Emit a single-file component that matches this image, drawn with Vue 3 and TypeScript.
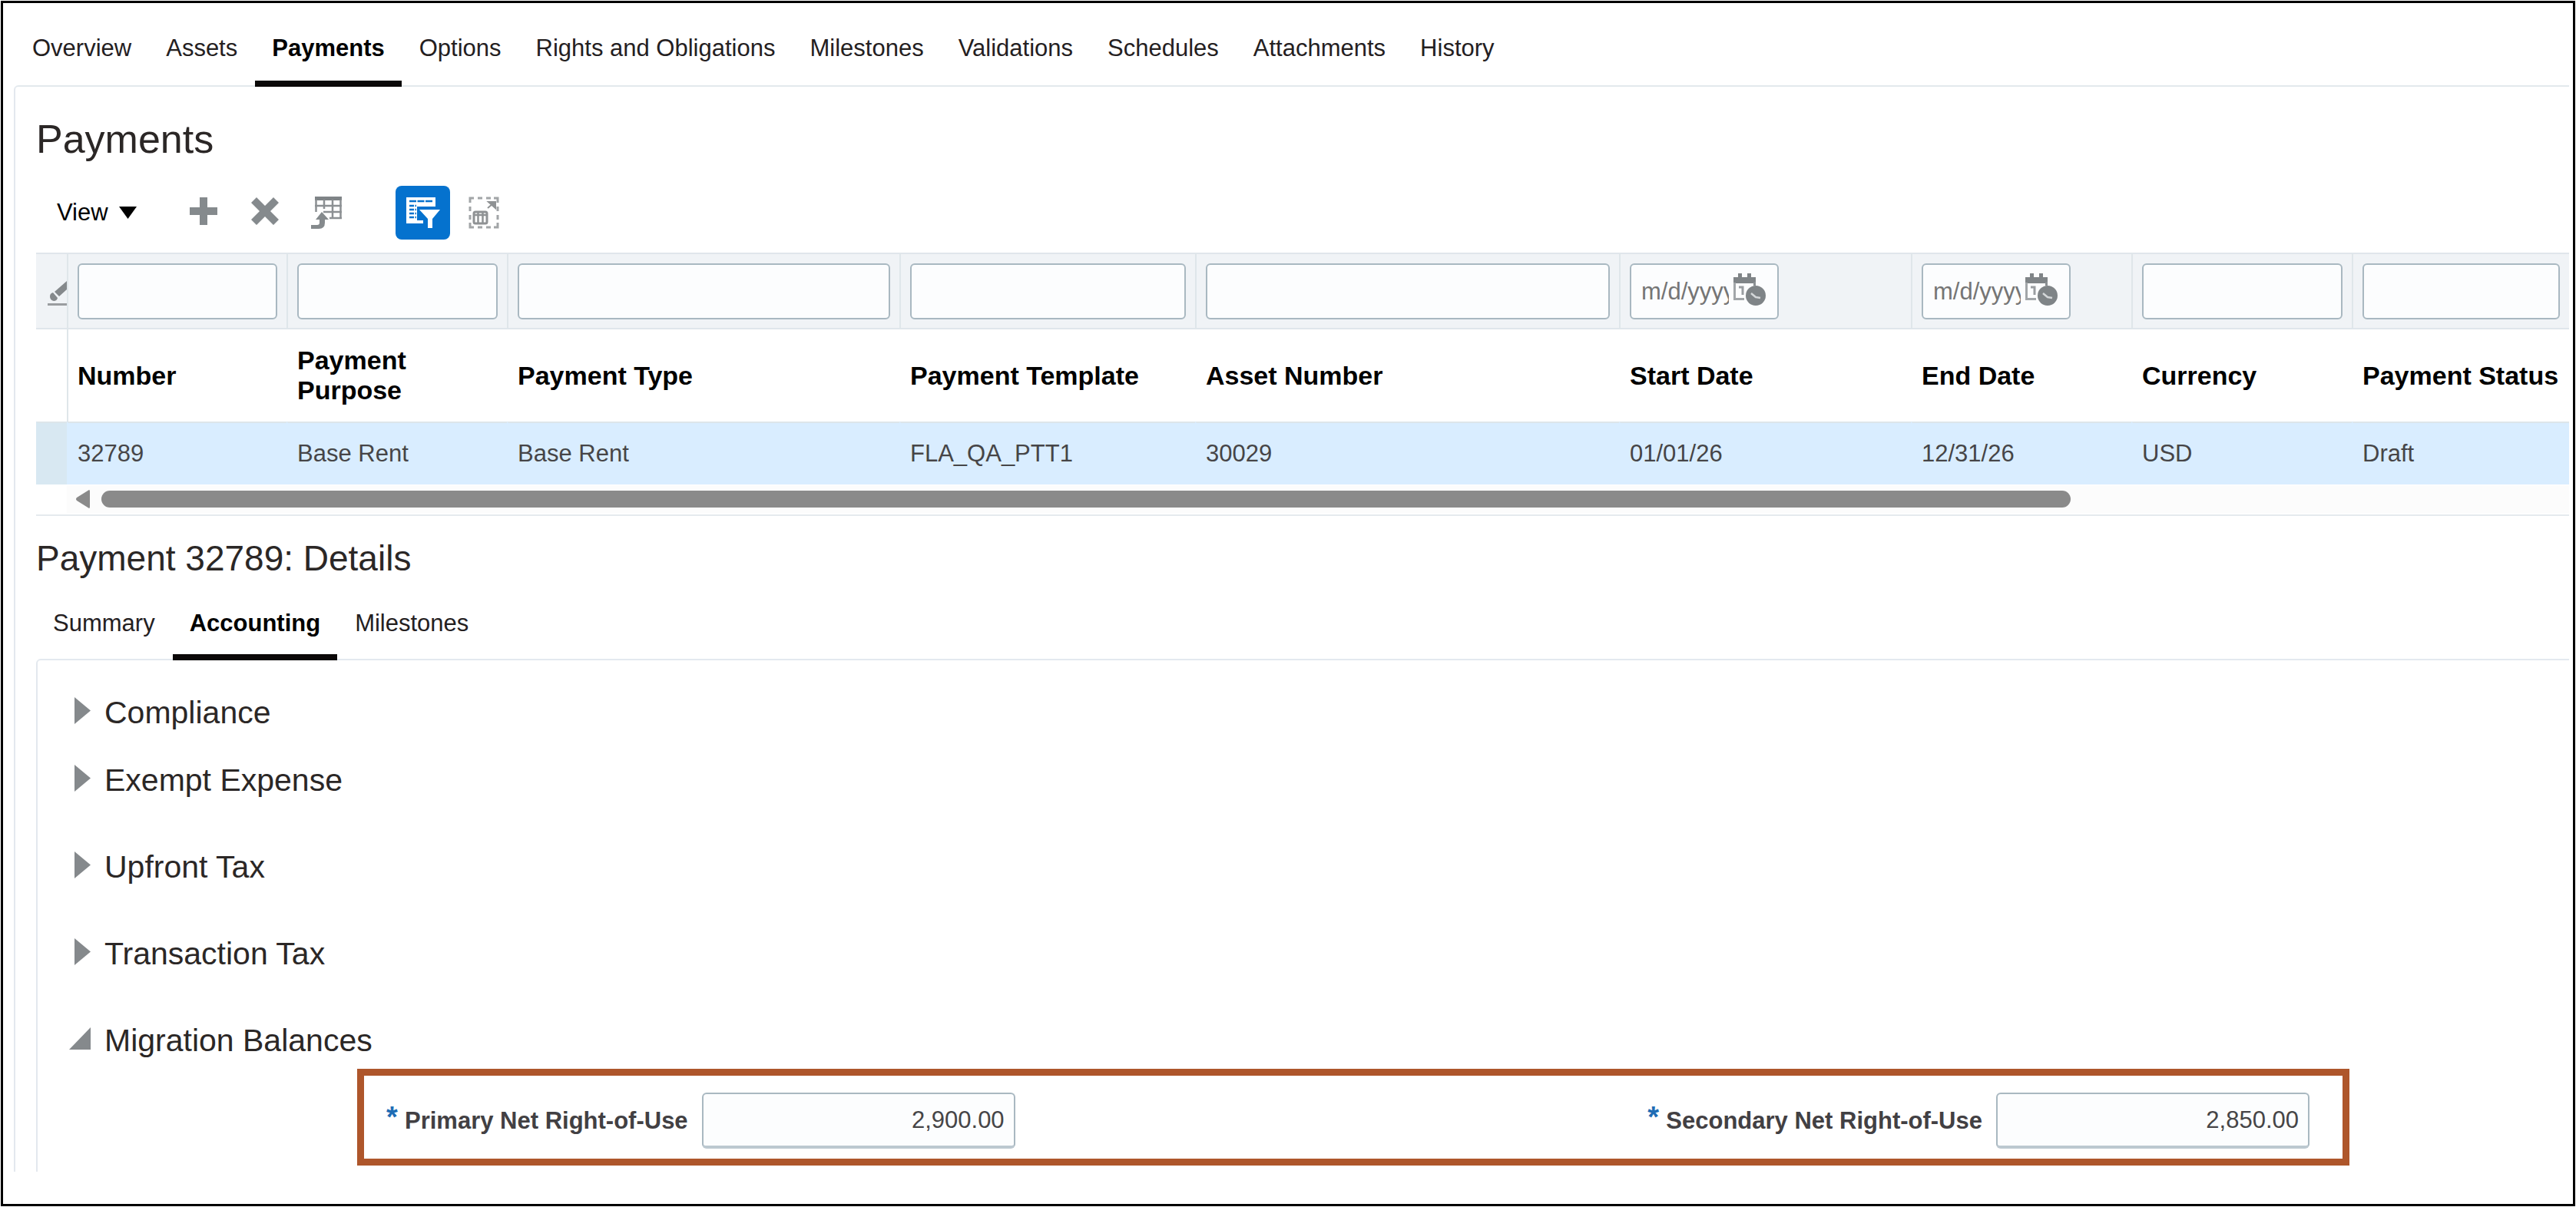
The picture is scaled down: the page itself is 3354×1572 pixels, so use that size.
<script setup lang="ts">
import { reactive, ref } from 'vue'

interface Column {
  key: string
  label: string
  width: number
  date?: boolean
}

const tabs: string[] = [
  'Overview', 'Assets', 'Payments', 'Options', 'Rights and Obligations',
  'Milestones', 'Validations', 'Schedules', 'Attachments', 'History',
]
const activeTab = ref('Payments')

const detailTabs: string[] = ['Summary', 'Accounting', 'Milestones']
const activeDetail = ref('Accounting')

const columns: Column[] = [
  { key: 'number', label: 'Number', width: 286 },
  { key: 'purpose', label: 'Payment Purpose', width: 287 },
  { key: 'type', label: 'Payment Type', width: 511 },
  { key: 'template', label: 'Payment Template', width: 385 },
  { key: 'asset', label: 'Asset Number', width: 552 },
  { key: 'start', label: 'Start Date', width: 380, date: true },
  { key: 'end', label: 'End Date', width: 287, date: true },
  { key: 'currency', label: 'Currency', width: 287 },
  { key: 'status', label: 'Payment Status', width: 283 },
]

const rows: Record<string, string>[] = [
  {
    number: '32789',
    purpose: 'Base Rent',
    type: 'Base Rent',
    template: 'FLA_QA_PTT1',
    asset: '30029',
    start: '01/01/26',
    end: '12/31/26',
    currency: 'USD',
    status: 'Draft',
  },
]

const visibleShare = 80

const sections = reactive([
  { title: 'Compliance', open: false, tight: true },
  { title: 'Exempt Expense', open: false, tight: false },
  { title: 'Upfront Tax', open: false, tight: false },
  { title: 'Transaction Tax', open: false, tight: false },
  { title: 'Migration Balances', open: true, tight: false },
])

const primary = ref('2,900.00')
const secondary = ref('2,850.00')
</script>

<template>
  <div class="page">
    <div class="frame">
      <nav class="tabs" aria-label="Lease sections">
        <button
          v-for="tab in tabs"
          :key="tab"
          type="button"
          class="tab"
          :class="{ active: tab === activeTab }"
          @click="activeTab = tab"
        >{{ tab }}</button>
      </nav>

      <main class="panel">
        <h1 class="title">Payments</h1>

        <div class="toolbar">
          <button type="button" class="view">
            View
            <svg width="23" height="16" viewBox="0 0 23 16" aria-hidden="true"><path d="M0 0H23L11.500 16Z" fill="#000" /></svg>
          </button>
          <div class="tools">
            <button type="button" class="tool" aria-label="Add">
              <svg width="36" height="38" viewBox="0 0 36 38"><path d="M13 1h10v13h13v10H23v13H13V24H0V14h13z" fill="#858a8d" /></svg>
            </button>
            <button type="button" class="tool" aria-label="Delete">
              <svg width="38" height="38" viewBox="0 0 38 38"><path d="M8 1l11 11L30 1l7 7-11 11 11 11-7 7-11-11L8 37l-7-7 11-11L1 8z" fill="#858a8d" /></svg>
            </button>
            <button type="button" class="tool" aria-label="Duplicate">
              <svg width="40" height="42" viewBox="0 0 40 42">
                <path d="M5 0h35v5H5z" fill="#7f8487" />
                <path d="M6.500 4v16M17 4v12M28 4v24M38.500 4v24M5 12h35M16 20h24M24 28h16" fill="none" stroke="#8c9093" stroke-width="2.500" />
                <path d="M14 20l9 10h-5v4q0 8-8 8H0v-5h8q3 0 3-3v-4H6z" fill="#858a8d" />
              </svg>
            </button>
          </div>
          <button type="button" class="filter" aria-label="Query by example" aria-pressed="true">
            <svg width="71" height="70" viewBox="0 0 71 70">
              <path d="M14 15h38v12H28v18h8v4H14z" fill="#fff" />
              <path d="M18 20h30" stroke="#0572ce" stroke-width="2.500" stroke-dasharray="9 1.500" />
              <path d="M18 26h9M18 31h9M18 36h9M18 41h9" stroke="#0572ce" stroke-width="2.500" stroke-dasharray="6 1.500" />
              <path d="M31 31h27L48 43v12h-6V43z" fill="#fff" />
            </svg>
          </button>
          <button type="button" class="tool detach" aria-label="Detach">
            <svg width="40" height="42" viewBox="0 0 40 42">
              <path d="M7 2H2v6M33 2h5v6M7 40H2v-6M33 40h5v-6M12 2h6M23 2h6M12 40h6M23 40h6M2 13v6M2 24v6M38 13v6M38 24v6" fill="none" stroke="#a2a5a7" stroke-width="3" />
              <rect x="7" y="20" width="17" height="15" rx="2" fill="none" stroke="#8f9294" stroke-width="3" />
              <path d="M12.500 20v15M18.500 20v15M7 24h17" stroke="#8f9294" stroke-width="2.500" />
              <path d="M25 15l7-6M26 7h9v8z" fill="#8f9294" stroke="#8f9294" stroke-width="2" />
            </svg>
          </button>
        </div>

        <div class="grid-area">
          <table class="grid">
            <colgroup>
              <col style="width: 40px" />
              <col v-for="col in columns" :key="col.key" :style="{ width: col.width + 'px' }" />
            </colgroup>
            <thead>
              <tr class="filters">
                <td class="gutter">
                  <button type="button" class="eraser" aria-label="Clear filters">
                    <svg width="25" height="40" viewBox="0 -7 25 40">
                      <path d="M25 0v11l-10 9-6-6z" fill="#85898c" />
                      <path d="M7 15l6 7q-1 4-5 4-5-1-5-6 0-4 4-5z" fill="#85898c" />
                      <path d="M0 30.500h25" stroke="#9a9da0" stroke-width="3" />
                    </svg>
                  </button>
                </td>
                <td v-for="col in columns" :key="col.key">
                  <div v-if="col.date" class="date-box">
                    <input type="text" class="date-input" placeholder="m/d/yyyy" :aria-label="'Filter ' + col.label" />
                    <button type="button" class="calendar" :aria-label="'Pick ' + col.label">
                      <svg width="42" height="48" viewBox="0 0 42 48">
                        <path d="M0 5h6V0h5v5h7V0h5v5h6v8H0z" fill="#7f8487" />
                        <path d="M1.500 12v21.500H14" fill="none" stroke="#a2a6a9" stroke-width="3" />
                        <path d="M27.500 11v5" stroke="#8a8f92" stroke-width="3" />
                        <path d="M7 18h5v10" fill="none" stroke="#9a9ea1" stroke-width="3" />
                        <circle cx="29" cy="29" r="13" fill="#7f8487" />
                        <path d="M23 26l6 5 6 1" fill="none" stroke="#d4d7d9" stroke-width="2.500" />
                      </svg>
                    </button>
                  </div>
                  <input v-else type="text" class="box" :aria-label="'Filter ' + col.label" />
                </td>
              </tr>
              <tr class="heads">
                <td class="gutter-head"></td>
                <th v-for="col in columns" :key="col.key" scope="col">{{ col.label }}</th>
              </tr>
            </thead>
            <tbody>
              <tr v-for="row in rows" :key="row.number" class="selected">
                <td class="gutter-cell"></td>
                <td v-for="col in columns" :key="col.key">{{ row[col.key] }}</td>
              </tr>
            </tbody>
          </table>
          <div class="scroll">
            <svg width="18" height="24" viewBox="0 0 18 24" aria-hidden="true"><path d="M17 0q1 0 1 2v20q0 2-1 2L1 14q-2-2 0-4z" fill="#8a8a8a" /></svg>
            <div class="track">
              <div class="thumb" :style="{ width: visibleShare + '%' }"></div>
            </div>
          </div>
        </div>

        <h2 class="subtitle">Payment 32789: Details</h2>

        <nav class="tabs inner" aria-label="Payment details">
          <button
            v-for="tab in detailTabs"
            :key="tab"
            type="button"
            class="tab"
            :class="{ active: tab === activeDetail }"
            @click="activeDetail = tab"
          >{{ tab }}</button>
        </nav>

        <div class="details">
          <section v-for="s in sections" :key="s.title" class="section" :class="{ tight: s.tight }">
            <h3 class="heading">
              <button type="button" class="disclose" :aria-expanded="s.open" @click="s.open = !s.open">
                <svg width="28" height="48" viewBox="0 0 28 48" aria-hidden="true">
                  <path :d="s.open ? 'M28 7V36H0Z' : 'M7 4L28 21.500L7 39Z'" fill="#85898c" />
                </svg>
                {{ s.title }}
              </button>
            </h3>
            <div v-if="s.title === 'Migration Balances' && s.open" class="balances">
              <div class="field">
                <label for="primary-rou"><span class="star">*</span>Primary Net Right-of-Use</label>
                <input id="primary-rou" v-model="primary" type="text" class="amount" required />
              </div>
              <div class="field">
                <label for="secondary-rou"><span class="star">*</span>Secondary Net Right-of-Use</label>
                <input id="secondary-rou" v-model="secondary" type="text" class="amount" required />
              </div>
            </div>
          </section>
        </div>
      </main>
    </div>
  </div>
</template>

<style>
html,
body {
  background: #fff;
}
</style>

<style scoped>
.page,
.page * {
  box-sizing: border-box;
}

.page {
  display: flex;
  min-height: 100vh;
  padding: 1px;
  font-family: "Liberation Sans", Arial, sans-serif;
  font-size: 31px;
  line-height: 36px;
  color: #24201f;
}

.frame {
  flex: 1;
  min-width: 0;
  border: 3px solid #000;
}

button {
  margin: 0;
  padding: 0;
  border: 0;
  background: none;
  font: inherit;
  color: inherit;
  cursor: pointer;
}

svg {
  display: block;
  flex: none;
}

h1,
h2,
h3 {
  margin: 0;
  font-weight: 400;
  color: #2b2726;
}

.tabs {
  display: flex;
  gap: 1px;
  padding: 41px 0 0 16px;
}

.tab {
  position: relative;
  z-index: 1;
  flex: none;
  padding: 0 22px 24px;
  border-bottom: 8px solid transparent;
  white-space: nowrap;
}

.tab.active {
  border-bottom-color: #0b0808;
  font-weight: 700;
  color: #000;
}

.panel {
  margin: -2px 5px 0 14px;
  padding: 38px 0 0 27px;
  border-top: 2px solid #e3e9ed;
  border-left: 2px solid #e3e8ee;
  border-top-left-radius: 6px;
}

.title {
  font-size: 52px;
  line-height: 60px;
}

.toolbar {
  display: flex;
  align-items: center;
  margin: 31px 0 17px;
  padding-left: 27px;
  color: #000;
}

.view {
  display: flex;
  align-items: center;
  gap: 14px;
}

.tools {
  display: flex;
  margin-left: 47px;
}

.tool {
  display: flex;
  justify-content: center;
  width: 80px;
}

.filter {
  margin-left: 50px;
  border-radius: 8px;
  background: #0572ce;
}

.detach {
  margin-left: 4px;
}

.grid-area {
  padding-bottom: 2px;
  border-bottom: 2px solid #e5eaee;
}

.grid {
  width: 100%;
  table-layout: fixed;
  border-collapse: separate;
  border-spacing: 0;
}

.grid td,
.grid th {
  padding: 0 0 0 10px;
  text-align: left;
}

.filters td {
  height: 100px;
  padding: 12px 12px 11px 12px;
  border-top: 2px solid #e0e6eb;
  border-bottom: 2px solid #dfe6eb;
  border-left: 2px solid #dfe6ea;
  background: #f0f3f6;
}

.filters td.gutter {
  padding: 0;
  border-left: 0;
}

.eraser {
  display: block;
  margin-left: auto;
}

.box,
.date-box,
.amount {
  display: block;
  height: 73px;
  border: 2px solid #a9b8c1;
  border-radius: 6px;
  background: #fcfdfe;
}

.box {
  width: 100%;
  padding: 0 12px;
  font: inherit;
}

.date-box {
  display: flex;
  align-items: center;
  gap: 6px;
  width: 194px;
  padding: 0 13px;
}

.date-input {
  width: 114px;
  height: 48px;
  padding: 0;
  border: 0;
  background: transparent;
  font: inherit;
}

.date-input::placeholder {
  color: #757575;
  opacity: 1;
}

.grid .heads th {
  height: 120px;
  padding: 0 90px 0 12px;
  font-size: 34px;
  font-weight: 700;
  line-height: 39px;
  color: #000;
}

.grid .heads th:nth-child(n + 4) {
  padding-right: 0;
}

.heads th:nth-child(2) {
  border-left: 2px solid #dfe6ea;
}

.grid .heads th:nth-child(n + 3) {
  border-left: 2px solid transparent;
}

.selected td {
  height: 82px;
  border-top: 2px solid #dde5ea;
  border-left: 2px solid #d9edff;
  background: #d9edff;
  color: #464547;
}

.grid .selected td {
  padding-left: 12px;
}

.selected td.gutter-cell {
  border-left-color: #d8e8f2;
  background: #d8e8f2;
}

.scroll {
  display: flex;
  align-items: center;
  gap: 15px;
  height: 36px;
  margin: 1px 0 0 40px;
  padding-left: 12px;
  background: #fcfcfc;
}

.track {
  flex: 1;
  padding-right: 8px;
}

.thumb {
  height: 22px;
  border-radius: 11px;
  background: #8a8a8a;
}

.subtitle {
  margin-top: 28px;
  font-size: 46px;
  line-height: 54px;
}

.tabs.inner {
  padding-top: 40px;
  padding-left: 0;
}

.inner .tab {
  padding-bottom: 22px;
}

.details {
  margin-top: -2px;
  padding: 44px 0 8px 41px;
  border-top: 2px solid #e3e9ef;
  border-left: 2px solid #e3e8ee;
  border-top-left-radius: 6px;
}

.section {
  margin-bottom: 65px;
}

.section.tight {
  margin-bottom: 40px;
}

.section:last-child {
  margin-bottom: 0;
}

.heading {
  font-size: 41px;
  line-height: 48px;
}

.disclose {
  display: flex;
  gap: 18px;
}

.balances {
  display: flex;
  flex-wrap: wrap;
  justify-content: space-between;
  margin: 13px 286px 0 375px;
  padding: 22px 43px 13px 29px;
  border: 9px solid #ae562b;
}

.field {
  display: flex;
  align-items: center;
  gap: 18px;
  font-size: 31px;
  line-height: 36px;
}

.field label {
  display: flex;
  font-weight: 700;
  color: #424043;
}

.star {
  width: 24px;
  font-size: 38px;
  line-height: 26px;
  color: #1f6db5;
}

.amount {
  width: 408px;
  padding: 0 12px;
  border-bottom-width: 4px;
  border-bottom-color: #bcc8d0;
  font: inherit;
  text-align: right;
  color: #464547;
}
</style>
